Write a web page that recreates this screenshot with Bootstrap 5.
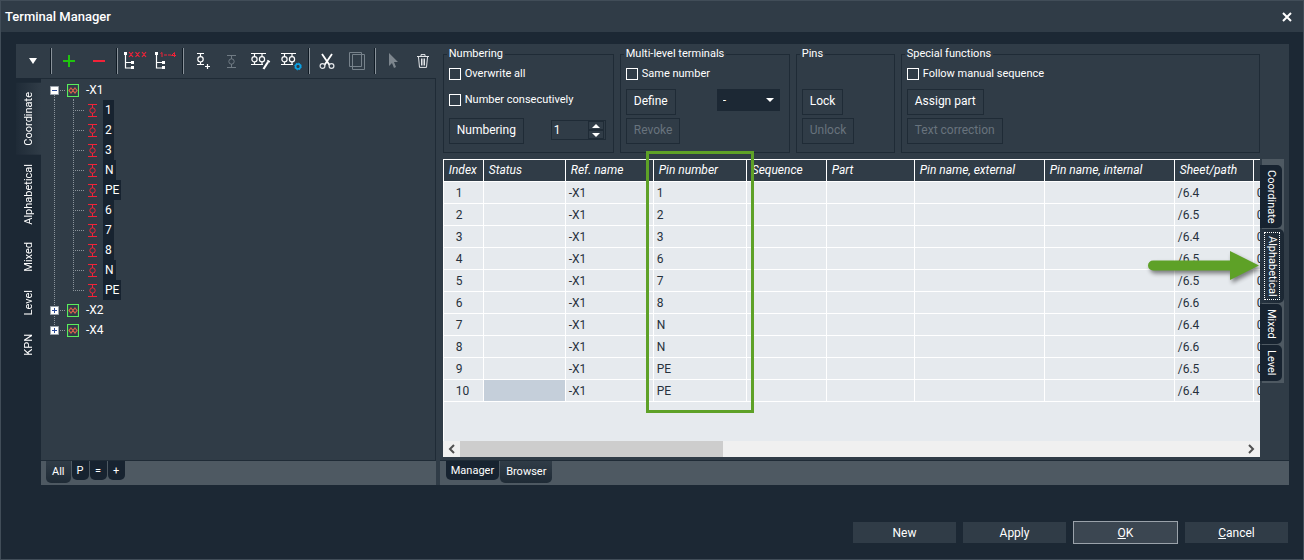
<!DOCTYPE html>
<html lang="en">
<head>
<meta charset="utf-8">
<meta name="viewport" content="width=device-width, initial-scale=1">
<title>Terminal Manager</title>
<link href="https://cdn.jsdelivr.net/npm/bootstrap@5.3.0/dist/css/bootstrap.min.css" rel="stylesheet">
<style>
:root{--deep:#1c2834;--panel:#303c47;--strip:#4e5962;--edge:#1f2b36;--tab:#172330;--sheet:#e6eaee}
body{font:12px/14px Roboto,"Liberation Sans",sans-serif;color:#fff;background:var(--deep);border:1px solid #414d58}
button{color:inherit;font:inherit;background:none;border:0;padding:0}
svg{display:block;flex:none}
.titlebar{background:var(--panel);height:31px;padding:0 11px 0 4px}
.titlebar h1{font-size:13px;line-height:16px;font-weight:500}
.work{padding:12px 14px 0 15px}
.side{flex:0 0 420px}
.toolbar{background:var(--panel);height:34px;padding-left:2px}
.tool{width:30px;height:34px;display:flex;align-items:center;justify-content:center}
.tool:last-child{width:28px;padding-left:2px}
.rule{width:6px;height:26px;flex:none;background:linear-gradient(90deg,transparent 2px,#0f1a24 2px,#0f1a24 3px,#8a939b 3px,#8a939b 4px,transparent 4px)}
.vtabs-left{width:25px;padding-top:5px}
.vtab{writing-mode:vertical-rl;display:flex;align-items:center;justify-content:center;width:100%;white-space:nowrap;font-size:11px}
.vtabs-left .vtab{transform:rotate(180deg);padding:9px 0}
.vtabs-left .vtab.active{background:linear-gradient(90deg,#303c47,#1f2b37)}
.tree-panel{background:var(--panel);border:1px solid var(--edge);border-width:1px 1px 1px 0}
.tree-list{padding-top:1px}
.tree-list li{height:20px;display:flex;align-items:center}
.pin-label{background:var(--tab);padding:3px 2px;height:20px}
.strip{background:var(--strip);height:24px;padding-left:5px}
.strip.right{padding-left:6px}
.btab{background:var(--tab);height:19px;border-radius:0 0 5px 5px;margin-right:1px;padding:0 5px;min-width:17px;font-size:11px}
.btab.active{background:linear-gradient(var(--panel),#1f2b36);height:22px;padding:0 6px}
.splitter{width:4px;background:var(--panel)}
.work-main{background:var(--panel);min-width:0}
.main-body{padding:3px;border-bottom:1px solid var(--edge)}
.group{border:1px solid var(--edge);padding:7px 5px;height:106px;min-width:0}
.group legend{font-size:11px;line-height:14px;margin:0 0 0 -2px;padding:0 2px}
.groups{gap:7px;margin-right:26px}
.g-num{width:171px}.g-multi{width:170px}.g-pins{width:99px}
.groups{gap:6px}
.check{display:flex;align-items:center;gap:4px;height:12px;font-size:11px;line-height:12px}
.check input{appearance:none;width:12px;height:12px;border:1px solid #fff;margin:0;flex:none;border-radius:0;background:none}
.check input:checked{background:#fff}
.second{margin:14px 0 12px}
.cmd{border:1px solid var(--edge);height:26px;padding:0 7px 2px;line-height:22px;white-space:nowrap}
.cmd:disabled{color:#68737d}
.gap-a{height:9px}.gap-b{height:3px}
.spin{border:1px solid var(--edge);width:55px;height:20px;margin:2px 2px 0 0}
.spin input{width:36px;background:none;border:0;color:#fff;padding:0 0 0 2px;appearance:textfield;-moz-appearance:textfield}
.spin input::-webkit-inner-spin-button{appearance:none}
.spin button{width:16px;height:9px;border:1px solid var(--edge);display:flex;align-items:center;justify-content:center}
.level{appearance:none;width:63px;height:22px;background:var(--deep);color:#fff;border:0;border-radius:0;padding:0 6px}
.level-arrow{right:6px;top:9px;pointer-events:none}
.browser{margin-top:6px}
.sheet-area{min-width:0}
.grid-box{background:var(--sheet);border:1px solid #fff;border-width:1px 0 0 1px}
.pins-table{width:870px;table-layout:fixed;border-collapse:separate;border-spacing:0;margin:0;--bs-table-bg:transparent;--bs-table-color:#26313c}
.pins-table>:not(caption)>*>*{padding:1px 4px 0 3px;border:1px solid #fff;border-width:0 1px 1px 0;height:22px;line-height:20px;vertical-align:top;white-space:nowrap}
.pins-table>thead>tr>th{background:var(--panel);color:#fff;font-weight:400;font-style:italic;padding:0 0 0 5px}
.pins-table>tbody>tr>td:first-child{padding-left:12px}
.pins-table>tbody>tr>td.picked{background:#c5cfda}
.hbar{height:16px;background:#f0f0f0}
.hbar button{width:17px;height:16px;display:flex;align-items:center;justify-content:center}
.thumb{width:263px;height:16px;background:#cdcdcd}
.focus-frame{left:203px;top:-8px;width:108px;height:262px;border:3px solid #5ea127;pointer-events:none}
.arrow{right:0;top:89px;pointer-events:none;filter:drop-shadow(2px 3px 2px #0007)}
.vtabs-right{width:26px;background:linear-gradient(90deg,transparent 2px,var(--strip) 2px);padding:6px 0 1px;margin-right:2px}
.vtabs-right .vtab{width:22px;background:var(--tab);border-radius:0 5px 5px 0;margin-bottom:1px}
.vtabs-right .vtab.active{width:24px;background:linear-gradient(90deg,#263340,#1b2733)}
.h-coord{height:63px}.h-alpha{height:74px}.h-mixed{height:40px}.h-level{height:36px}
.vtab.active span{outline:1px dotted #fff;padding:3px 0}
.footer{padding:36px 15px 15px;gap:7px}
.foot-btn{width:103px;height:21px;background:var(--panel)}
.foot-btn.main{width:105px;height:23px;background:#3b4651;border:1px solid #9aa2aa}
</style>
</head>
<body class="d-flex flex-column min-vh-100">
<svg width="0" height="0" class="position-absolute" aria-hidden="true">
<defs>
<symbol id="term" viewBox="0 0 9 13"><g fill="none" stroke="currentColor"><path d="M0 .5h9M0 12.500h9M4.500 1v3M4.500 9v3"/><circle cx="4.500" cy="6.500" r="2.700"/></g></symbol>
<symbol id="term-plus" viewBox="0 0 20 20"><g fill="none" stroke="currentColor" stroke-width="1.2"><path d="M4 2.500h7M4 13.500h7M7.500 2.500v3M7.500 11v2.500"/><circle cx="7.500" cy="8.300" r="2.700"/><path d="M12 15.500h5M14.500 13v5"/></g></symbol>
<symbol id="term-pair" viewBox="0 0 22 20"><g fill="none" stroke="currentColor" stroke-width="1.200"><path d="M1 2.500h15M1 13.500h12M4.500 2.500v3M12 2.500v3M4.500 11v2.500M12 11v2"/><circle cx="4.500" cy="8.300" r="2.600"/><circle cx="12" cy="8.300" r="2.600"/></g></symbol>
<symbol id="tree" viewBox="0 0 22 20"><path d="M2.500 3v14h6M2.500 11.500h6" fill="none" stroke="currentColor" stroke-width="1.200"/><path d="M1 1h3v3H1zM8 10h3v3H8zM8 15h3v3H8z" fill="currentColor"/></symbol>
<symbol id="leaf" viewBox="0 0 62 20"><path d="M13.500 0v20M32.500 0v20M34 10.500h10" stroke="#8a939b" stroke-dasharray="1 1" fill="none"/><use href="#term" x="47" y="4" width="9" height="13" color="#f22238"/></symbol>
<symbol id="leaf-end" viewBox="0 0 62 20"><path d="M13.500 0v20M32.500 0v11M34 10.500h10" stroke="#8a939b" stroke-dasharray="1 1" fill="none"/><use href="#term" x="47" y="4" width="9" height="13" color="#f22238"/></symbol>
<symbol id="strip-icon" viewBox="0 0 12 14"><path d="M.5.500h11v12h-11z" fill="none" stroke="#5bee5b" stroke-width="1.200"/><path d="M4 4l2 2.500L4 9 2 6.500zM8 4l2 2.500L8 9 6 6.500z" fill="none" stroke="#d8624c" stroke-width="1.200"/></symbol>
<symbol id="box" viewBox="0 0 9 9"><path d="M.5.500h8v8h-8z" fill="#fff" stroke="#9aa2aa"/><path d="M2 4.500h5" stroke="#2b4a96"/></symbol>
</defs>
</svg>

<header class="titlebar d-flex align-items-center justify-content-between">
<h1 class="m-0">Terminal Manager</h1>
<button type="button" aria-label="Close"><svg width="10" height="10" viewBox="0 0 10 10"><path d="M1 1l8 8M9 1L1 9" stroke="#fff" stroke-width="2"/></svg></button>
</header>

<main class="work d-flex flex-grow-1">
<section class="side d-flex flex-column">
<div class="toolbar d-flex align-items-center" role="toolbar" aria-label="Terminals">
<button class="tool" type="button" aria-label="Menu"><svg width="8" height="6"><path d="M0 0h8L4 6z" fill="#fff"/></svg></button>
<span class="rule"></span>
<button class="tool" type="button" aria-label="Add"><svg width="12" height="12"><path d="M0 6h12M6 0v12" stroke="#1fc40e" stroke-width="2"/></svg></button>
<button class="tool" type="button" aria-label="Remove"><svg width="12" height="12"><path d="M0 6h12" stroke="#f22238" stroke-width="2"/></svg></button>
<span class="rule"></span>
<button class="tool" type="button" aria-label="Rename tree"><svg width="24" height="20"><use href="#tree" width="22" height="20"/><path d="M6 1l4 5M10 1l-4 5M12.500 1l4 5M16.500 1l-4 5M19 1l4 5M23 1l-4 5" stroke="#f22238" stroke-width="1.200"/></svg></button>
<button class="tool" type="button" aria-label="Renumber tree"><svg width="22" height="20"><use href="#tree" width="22" height="20"/><path d="M6.500 2.500l1.500-1V6M10 4h3M14 4h3M20.500 6V1.500L17.500 4.500H22" stroke="#f22238" fill="none"/></svg></button>
<span class="rule"></span>
<button class="tool ps-1" type="button" aria-label="Insert terminal"><svg width="20" height="20"><use href="#term-plus" width="20" height="20"/></svg></button>
<button class="tool" type="button" aria-label="Terminal" disabled><svg width="9" height="15" color="#707b84"><use href="#term" width="9" height="15"/></svg></button>
<button class="tool" type="button" aria-label="Edit terminals"><svg width="22" height="20"><use href="#term-pair" width="22" height="20"/><path d="M13.500 18l4.500-7" stroke="#fff" stroke-width="2.200"/><path d="M18 11l1-1.500" stroke="#fff" stroke-width="3"/></svg></button>
<button class="tool" type="button" aria-label="Terminal settings"><svg width="22" height="20"><use href="#term-pair" width="22" height="20"/><circle cx="18" cy="15.500" r="2.400" fill="none" stroke="#0aa4e8" stroke-width="1.500"/><circle cx="18" cy="15.500" r="3.400" fill="none" stroke="#0aa4e8" stroke-dasharray="1.340 1.330"/></svg></button>
<span class="rule"></span>
<button class="tool" type="button" aria-label="Cut"><svg width="16" height="17" viewBox="0 0 16 17"><path d="M3 1l7.500 11M13 1L5.500 12" stroke="#fff" stroke-width="1.800"/><circle cx="3.500" cy="13" r="2.400" fill="none" stroke="#e4e7ea" stroke-width="1.200"/><circle cx="12.500" cy="13" r="2.400" fill="none" stroke="#e4e7ea" stroke-width="1.200"/></svg></button>
<button class="tool" type="button" aria-label="Copy" disabled><svg width="16" height="18"><path d="M.5.500h12v14h-12zM3.500 2.500h12v15h-12z" fill="none" stroke="#77828b"/></svg></button>
<span class="rule"></span>
<button class="tool" type="button" aria-label="Select" disabled><svg width="10" height="16"><path d="M1 0v13l3-3 2 5 2-1-2-5h4z" fill="#7d868e"/></svg></button>
<button class="tool" type="button" aria-label="Delete"><svg width="12" height="14" viewBox="0 0 12 14"><path d="M0 2.500h12M4 2V.600h4V2M1.500 3l1 10.400h7l1-10.400M4.500 4.500v7M6 4.500v7M7.500 4.500v7" fill="none" stroke="#e4e7ea"/></svg></button>
</div>
<div class="d-flex flex-grow-1">
<nav class="vtabs-left d-flex flex-column" aria-label="Tree sorting">
<button class="vtab active" type="button">Coordinate</button>
<button class="vtab" type="button">Alphabetical</button>
<button class="vtab" type="button">Mixed</button>
<button class="vtab" type="button">Level</button>
<button class="vtab" type="button">KPN</button>
</nav>
<div class="d-flex flex-column flex-grow-1">
<div class="tree-panel flex-grow-1">
<ul class="tree-list list-unstyled m-0">
<li><svg width="45" height="20"><path d="M13.500 15v5M32.500 19v1M19 10.500h6" stroke="#8a939b" stroke-dasharray="1 1"/><use href="#box" x="9" y="6" width="9" height="9"/><use href="#strip-icon" x="26" y="4" width="12" height="14"/></svg>-X1</li>
<li><svg width="62" height="20"><use href="#leaf"/></svg><span class="pin-label">1</span></li>
<li><svg width="62" height="20"><use href="#leaf"/></svg><span class="pin-label">2</span></li>
<li><svg width="62" height="20"><use href="#leaf"/></svg><span class="pin-label">3</span></li>
<li><svg width="62" height="20"><use href="#leaf"/></svg><span class="pin-label">N</span></li>
<li><svg width="62" height="20"><use href="#leaf"/></svg><span class="pin-label">PE</span></li>
<li><svg width="62" height="20"><use href="#leaf"/></svg><span class="pin-label">6</span></li>
<li><svg width="62" height="20"><use href="#leaf"/></svg><span class="pin-label">7</span></li>
<li><svg width="62" height="20"><use href="#leaf"/></svg><span class="pin-label">8</span></li>
<li><svg width="62" height="20"><use href="#leaf"/></svg><span class="pin-label">N</span></li>
<li><svg width="62" height="20"><use href="#leaf-end"/></svg><span class="pin-label">PE</span></li>
<li><svg width="45" height="20"><path d="M13.500 0v20M19 10.500h6" stroke="#8a939b" stroke-dasharray="1 1"/><use href="#box" x="9" y="6" width="9" height="9"/><path d="M13.500 8v5" stroke="#2b4a96"/><use href="#strip-icon" x="26" y="4" width="12" height="14"/></svg>-X2</li>
<li><svg width="45" height="20"><path d="M13.500 0v6M19 10.500h6" stroke="#8a939b" stroke-dasharray="1 1"/><use href="#box" x="9" y="6" width="9" height="9"/><path d="M13.500 8v5" stroke="#2b4a96"/><use href="#strip-icon" x="26" y="4" width="12" height="14"/></svg>-X4</li>
</ul>
</div>
<nav class="strip d-flex align-items-start" aria-label="Tree filter">
<button class="btab active" type="button">All</button>
<button class="btab" type="button">P</button>
<button class="btab" type="button">=</button>
<button class="btab" type="button">+</button>
</nav>
</div>
</div>
</section>
<div class="splitter"></div>

<section class="work-main d-flex flex-column flex-grow-1">
<div class="main-body d-flex flex-column flex-grow-1">
<div class="groups d-flex">
<fieldset class="group g-num">
<legend class="float-none w-auto">Numbering</legend>
<label class="check"><input type="checkbox">Overwrite all</label>
<label class="check second"><input type="checkbox">Number consecutively</label>
<div class="d-flex justify-content-between align-items-start">
<button class="cmd" type="button">Numbering</button>
<div class="spin d-flex"><input type="number" value="1" aria-label="Start number"><div><button type="button" aria-label="Up"><svg width="8" height="4"><path d="M0 4h8L4 0z" fill="#fff"/></svg></button><button type="button" aria-label="Down"><svg width="8" height="4"><path d="M0 0h8L4 4z" fill="#fff"/></svg></button></div></div>
</div>
</fieldset>
<fieldset class="group g-multi">
<legend class="float-none w-auto">Multi-level terminals</legend>
<label class="check"><input type="checkbox">Same number</label>
<div class="gap-a"></div>
<div class="d-flex justify-content-between">
<button class="cmd" type="button">Define</button>
<div class="position-relative me-1"><select class="level" aria-label="Level"><option>-</option></select><svg class="level-arrow position-absolute" width="8" height="4"><path d="M0 0h8L4 4z" fill="#fff"/></svg></div>
</div>
<div class="gap-b"></div>
<button class="cmd d-block" type="button" disabled>Revoke</button>
</fieldset>
<fieldset class="group g-pins">
<legend class="float-none w-auto">Pins</legend>
<div class="check"></div>
<div class="gap-a"></div>
<button class="cmd d-block" type="button">Lock</button>
<div class="gap-b"></div>
<button class="cmd d-block" type="button" disabled>Unlock</button>
</fieldset>
<fieldset class="group flex-grow-1">
<legend class="float-none w-auto">Special functions</legend>
<label class="check"><input type="checkbox">Follow manual sequence</label>
<div class="gap-a"></div>
<button class="cmd d-block" type="button">Assign part</button>
<div class="gap-b"></div>
<button class="cmd d-block" type="button" disabled>Text correction</button>
</fieldset>
</div>
<div class="browser d-flex flex-grow-1 align-items-stretch">
<div class="sheet-area position-relative d-flex flex-column flex-grow-1">
<div class="grid-box overflow-hidden flex-grow-1">
<table class="table pins-table">
<colgroup><col width="40"><col width="82"><col width="88"><col width="93"><col width="80"><col width="88"><col width="130"><col width="130"><col width="79"><col width="60"></colgroup>
<thead><tr><th>Index</th><th>Status</th><th>Ref. name</th><th>Pin number</th><th>Sequence</th><th>Part</th><th>Pin name, external</th><th>Pin name, internal</th><th>Sheet/path</th><th></th></tr></thead>
<tbody>
<tr><td>1</td><td></td><td>-X1</td><td>1</td><td></td><td></td><td></td><td></td><td>/6.4</td><td>0</td></tr>
<tr><td>2</td><td></td><td>-X1</td><td>2</td><td></td><td></td><td></td><td></td><td>/6.5</td><td>0</td></tr>
<tr><td>3</td><td></td><td>-X1</td><td>3</td><td></td><td></td><td></td><td></td><td>/6.4</td><td>0</td></tr>
<tr><td>4</td><td></td><td>-X1</td><td>6</td><td></td><td></td><td></td><td></td><td>/6.5</td><td>0</td></tr>
<tr><td>5</td><td></td><td>-X1</td><td>7</td><td></td><td></td><td></td><td></td><td>/6.5</td><td>0</td></tr>
<tr><td>6</td><td></td><td>-X1</td><td>8</td><td></td><td></td><td></td><td></td><td>/6.6</td><td>0</td></tr>
<tr><td>7</td><td></td><td>-X1</td><td>N</td><td></td><td></td><td></td><td></td><td>/6.4</td><td>0</td></tr>
<tr><td>8</td><td></td><td>-X1</td><td>N</td><td></td><td></td><td></td><td></td><td>/6.6</td><td>0</td></tr>
<tr><td>9</td><td></td><td>-X1</td><td>PE</td><td></td><td></td><td></td><td></td><td>/6.5</td><td>0</td></tr>
<tr><td>10</td><td class="picked"></td><td>-X1</td><td>PE</td><td></td><td></td><td></td><td></td><td>/6.4</td><td>0</td></tr>
</tbody>
</table>
</div>
<div class="hbar d-flex">
<button type="button" aria-label="Scroll left"><svg width="7" height="10"><path d="M6 1L2 5l4 4" fill="none" stroke="#505050" stroke-width="2"/></svg></button>
<div class="thumb"></div>
<button class="ms-auto" type="button" aria-label="Scroll right"><svg width="7" height="10"><path d="M1 1l4 4-4 4" fill="none" stroke="#505050" stroke-width="2"/></svg></button>
</div>
<div class="focus-frame position-absolute"></div>
<svg class="arrow position-absolute" width="113" height="34"><path d="M6 12.500H83V3L112 17.500 83 32V22.500H6a5 5 0 0 1 0-10z" fill="#5ea127"/></svg>
</div>
<nav class="vtabs-right d-flex flex-column align-self-start" aria-label="Pin sorting">
<button class="vtab h-coord" type="button">Coordinate</button>
<button class="vtab h-alpha active" type="button"><span>Alphabetical</span></button>
<button class="vtab h-mixed" type="button">Mixed</button>
<button class="vtab h-level" type="button">Level</button>
</nav>
</div>
</div>
<nav class="strip right d-flex align-items-start" aria-label="View">
<button class="btab" type="button">Manager</button>
<button class="btab active" type="button">Browser</button>
</nav>
</section>
</main>

<footer class="footer d-flex align-items-center justify-content-end">
<button class="foot-btn" type="button">New</button>
<button class="foot-btn" type="button">Apply</button>
<button class="foot-btn main" type="submit"><u>O</u>K</button>
<button class="foot-btn" type="button"><u>C</u>ancel</button>
</footer>
<script src="https://cdn.jsdelivr.net/npm/bootstrap@5.3.0/dist/js/bootstrap.bundle.min.js"></script>
</body>
</html>
